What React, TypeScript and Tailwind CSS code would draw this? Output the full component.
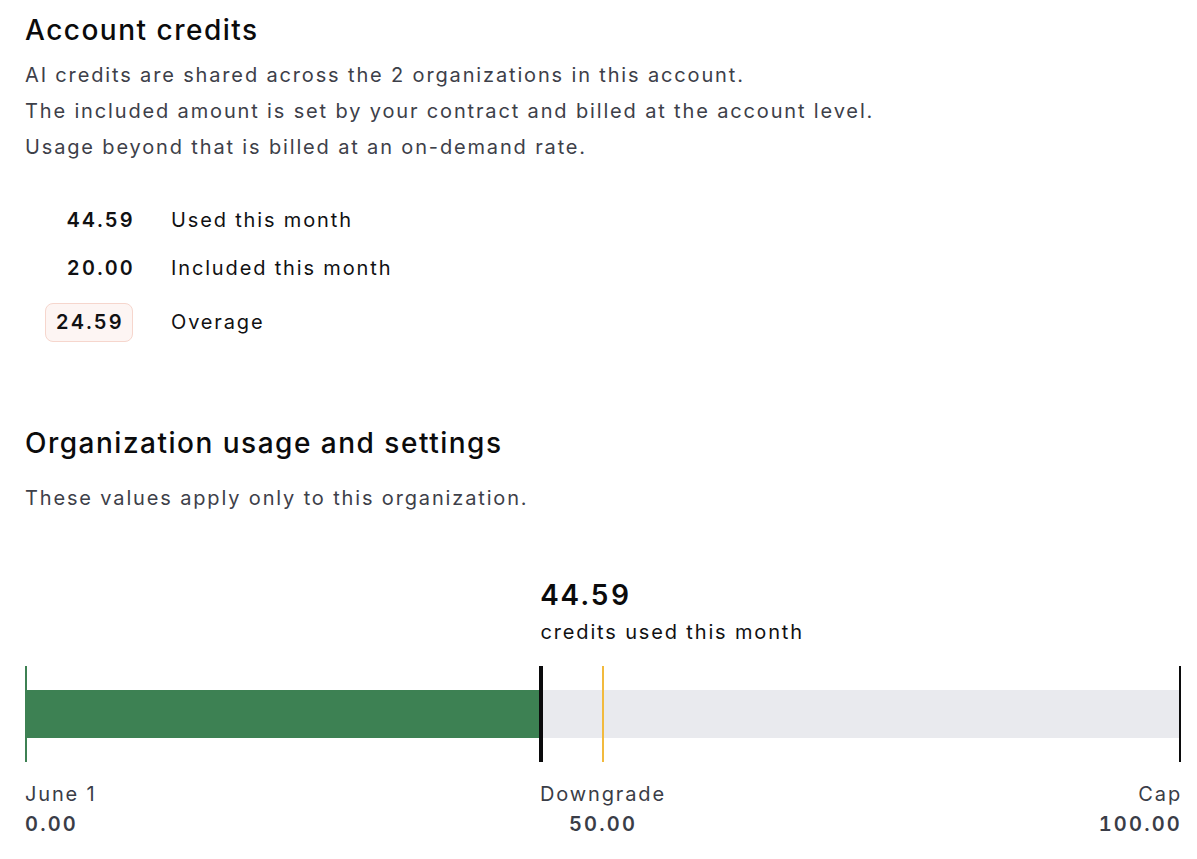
import React from 'react'

const stats = [
  { value: '44.59', label: 'Used this month' },
  { value: '20.00', label: 'Included this month' },
]

const usage = {
  used: 44.59,
  downgrade: 50,
  cap: 100,
}

const pct = (v: number) => `${(v / usage.cap) * 100}%`

export default function App() {
  return (
    <div
      className="min-h-screen bg-white pl-[25px] pr-[16px] pt-3 text-[#111113] tracking-[1.85px]"
      style={{ fontFamily: 'Inter, "Noto Sans", sans-serif' }}
    >
      {/* Account credits */}
      <h2 className="text-[28px] leading-[36px] font-medium tracking-[1.5px] text-[#0b0b0c]">Account credits</h2>
      <div className="mt-[9px] text-[20px] leading-[36px] text-[#3d4049]">
        <p>AI credits are shared across the 2 organizations in this account.</p>
        <p>The included amount is set by your contract and billed at the account level.</p>
        <p>Usage beyond that is billed at an on-demand rate.</p>
      </div>

      <div className="mt-[35px] text-[20px] leading-[40px]">
        {stats.map(s => (
          <div key={s.label} className="flex h-[40px] mb-[8px] items-center">
            <span className="w-[110px] text-right font-semibold tabular-nums tracking-[2.2px]">{s.value}</span>
            <span className="ml-[36px]">{s.label}</span>
          </div>
        ))}
        <div className="flex items-center mt-[14px]">
          <div className="w-[108px] flex justify-end">
            <span className="h-[39px] pl-[10px] pr-[8px] flex items-center rounded-lg border-[1.5px] border-[#f6d6cd] bg-[#fdf5f3] font-semibold tabular-nums tracking-[2.2px] leading-none">
              24.59
            </span>
          </div>
          <span className="ml-[38px]">Overage</span>
        </div>
      </div>

      {/* Organization usage */}
      <h2 className="mt-[83px] text-[28px] leading-[36px] font-medium tracking-[1.5px] text-[#0b0b0c]">
        Organization usage and settings
      </h2>
      <p className="mt-[19px] text-[20px] leading-[36px] text-[#3d4049]">
        These values apply only to this organization.
      </p>

      <div className="mt-[61px] relative h-[89px]">
        <div className="absolute top-0" style={{ left: pct(usage.used) }}>
          <div className="text-[28px] leading-[36px] font-semibold tabular-nums tracking-[2.2px] text-[#0b0b0c]">44.59</div>
          <div className="mt-[4px] text-[20px] leading-[30px] text-[#111113] whitespace-nowrap">
            credits used this month
          </div>
        </div>
      </div>

      {/* usage bar */}
      <div className="relative h-[96px]">
        <div className="absolute left-0 right-0 top-[24px] h-[48px] bg-[#e9eaee]" />
        <div className="absolute left-0 top-[24px] h-[48px] bg-[#3d8153]" style={{ width: pct(usage.used) }} />
        <div className="absolute left-0 top-0 h-full w-[2px] bg-[#3d8153]" />
        <div
          className="absolute top-0 h-full w-[4px] bg-[#0b0b0c]"
          style={{ left: `calc(${pct(usage.used)} - 1px)` }}
        />
        <div
          className="absolute top-0 h-full w-[2px] bg-[#f2ba3d]"
          style={{ left: `calc(${pct(usage.downgrade)} - 1px)` }}
        />
        <div className="absolute right-0 top-0 h-full w-[2px] bg-[#0b0b0c]" />
      </div>

      <div className="relative mt-[17px] flex justify-between text-[20px] leading-[30px] text-[#3a3d47]">
        <div>
          <div>June 1</div>
          <div className="font-semibold tabular-nums tracking-[2.2px]">0.00</div>
        </div>
        <div
          className="absolute top-0 -translate-x-1/2 text-center"
          style={{ left: pct(usage.downgrade) }}
        >
          <div>Downgrade</div>
          <div className="font-semibold tabular-nums tracking-[2.2px]">50.00</div>
        </div>
        <div className="text-right -mr-[1px]">
          <div>Cap</div>
          <div className="font-semibold tabular-nums tracking-[2.2px]">100.00</div>
        </div>
      </div>
    </div>
  )
}
